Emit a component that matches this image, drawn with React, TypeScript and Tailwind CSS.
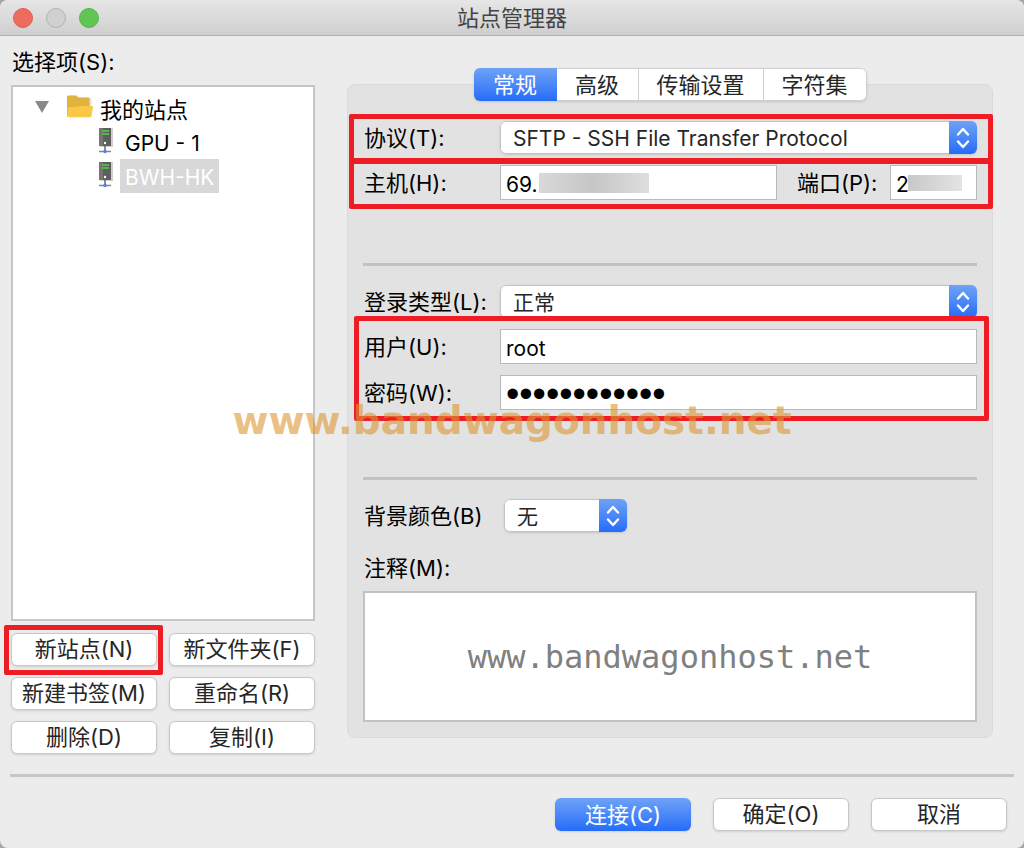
import { useState } from "react";
import type { ReactNode } from "react";

const tabs = [
  { label: "常规", width: "w-[83px]" },
  { label: "高级", width: "w-[82px]" },
  { label: "传输设置", width: "w-[125px]" },
  { label: "字符集", width: "w-[103px]" },
];

const siteButtons = ["新站点(N)", "新文件夹(F)", "新建书签(M)", "重命名(R)", "删除(D)", "复制(I)"];

const inputStyle = "h-[35px] min-w-0 border border-[#b9b9b9] bg-white pt-[3px] pl-[5px] text-[21px] outline-none";
const buttonStyle = "h-[33px] rounded-md border border-[#c8c8c8] bg-white pb-[2px] text-[#262626] shadow-sm";

function FolderIcon() {
  return (
    <svg width="28" height="34" viewBox="0 0 28 34" aria-hidden="true">
      <path d="M2 6q0-1.500 1.500-1.500h6.500l2 2h11q1.500 0 1.500 1.500v17q0 1.500-1.500 1.500h-19.500q-1.500 0-1.500-1.500z" fill="#d0d0d0" opacity=".6" />
      <path d="M0 6q0-1.500 1.500-1.500h7q1 0 1.500 1t1.500 1h9.500q1.500 0 1.500 1.500v9h-23z" fill="#e2b33c" />
      <path d="M0 15v9q0 2 2 2h3v-11z" fill="#e2b33c" />
      <path d="M3 16h7l3-1h12q1.200 0 1 1.200l-1.500 8.300q-.3 1.500-1.800 1.500h-21q-1.700 0-1.500-1.500l.7-7q.2-1.500 1.300-1.500z" fill="#f8c846" />
    </svg>
  );
}

function ServerIcon() {
  return (
    <svg width="16" height="34" viewBox="0 0 16 34" aria-hidden="true">
      <rect x="2" y="3" width="13" height="19" fill="#cfcfcf" />
      <rect x="1" y="3" width="12" height="18" fill="#5e5e5e" />
      <rect x="1" y="3" width="4" height="18" fill="#757575" />
      <rect x="4" y="5" width="7" height="2" fill="#55b649" />
      <rect x="4" y="8" width="7" height="2" fill="#55b649" />
      <circle cx="7" cy="18" r="1.200" fill="#fff" />
      <path d="M7 21v5" stroke="#666" strokeWidth="1.500" />
      <path d="M1 26.500h12" stroke="#888" strokeWidth="1.500" />
      <circle cx="7" cy="26.500" r="1.800" fill="#4a86e8" />
    </svg>
  );
}

function Select({ id, value, className }: { id: string; value: string; className: string }) {
  return (
    <div className={`relative flex h-[33px] overflow-hidden rounded-md shadow-sm ${className}`}>
      <select
        id={id}
        className="w-full appearance-none rounded-md border border-[#c4c4c4] bg-white pt-[2px] pr-8 pl-3 text-[21px] text-[#262626] outline-none"
      >
        <option>{value}</option>
      </select>
      <div className="pointer-events-none absolute inset-y-0 right-0 flex w-7 items-center justify-center bg-linear-to-b from-[#6fa2f6] to-[#246bf8]">
        <svg width="14" height="22" viewBox="0 0 14 22" fill="none" stroke="#fff" strokeWidth="2.400" strokeLinecap="round" strokeLinejoin="round" aria-hidden="true">
          <path d="M2 7.500l5-5.500 5 5.500M2 14.500l5 5.500 5-5.500" />
        </svg>
      </div>
    </div>
  );
}

function Row({ id, label, children }: { id: string; label: string; children: ReactNode }) {
  return (
    <div className="flex items-center">
      <label htmlFor={id} className="w-[137px] shrink-0 pl-px whitespace-nowrap">{label}</label>
      {children}
    </div>
  );
}

export default function App() {
  const [activeTab, setActiveTab] = useState("常规");

  return (
    <div className="min-h-screen bg-[#a8a8a8] font-['Inter','Noto_Sans_CJK_SC',sans-serif] text-[22px] leading-7 text-black">
      <div className="relative flex min-h-screen flex-col overflow-hidden rounded-lg bg-[#ececec]">
        {/* TITLE BAR */}
        <header className="relative flex h-9 items-center justify-center border-b border-[#b1b1b1] bg-linear-to-b from-[#e6e6e6] to-[#cfcfcf]">
          <div className="absolute left-[13px] flex gap-[13px]">
            <button aria-label="关闭" className="size-5 rounded-full border border-[#dc5f54] bg-[#ed6b5f]" />
            <button aria-label="最小化" className="size-5 rounded-full border border-[#b4b4b4] bg-[#d0d0d0]" />
            <button aria-label="缩放" className="size-5 rounded-full border border-[#56b44a] bg-[#61c554]" />
          </div>
          <h1 className="text-[#444444]">站点管理器</h1>
        </header>

        <main className="flex gap-8 pr-[31px] pl-[11px]">
          {/* SITE LIST */}
          <section className="flex w-[304px] shrink-0 flex-col pt-3">
            <h2 className="pl-px">选择项(S):</h2>
            <ul role="tree" className="mt-[9px] flex-1 border-2 border-[#c6c6c6] bg-white pt-1 text-[21px]">
              <li role="treeitem" aria-expanded="true" className="flex h-[34px] items-center pl-[21px]">
                <button aria-label="折叠" className="mr-[17px]">
                  <svg width="16" height="20" viewBox="0 0 16 20" aria-hidden="true">
                    <path d="M1 3h14l-7 12z" fill="#8a8a8a" />
                  </svg>
                </button>
                <FolderIcon />
                <span className="pt-1 pl-[5px] text-[22px]">我的站点</span>
              </li>
              <li role="treeitem" className="flex h-[34px] items-center pl-[85px]">
                <ServerIcon />
                <span className="ml-[6px] px-[5px] pt-1 leading-[30px]">GPU - 1</span>
              </li>
              <li role="treeitem" aria-selected="true" className="flex h-[34px] items-center pl-[85px]">
                <ServerIcon />
                <span className="ml-[6px] bg-[#d8d8d8] px-[5px] pt-1 leading-[30px] text-white">BWH-HK</span>
              </li>
            </ul>
            <div className="relative mt-3 grid grid-cols-2 gap-x-3 gap-y-[11px]">
              {siteButtons.map((name) => (
                <button key={name} className={buttonStyle}>
                  {name}
                </button>
              ))}
              <div className="pointer-events-none absolute -top-2 -left-[7px] h-[50px] w-[159px] rounded-xs border-5 border-[#ee1c24]" />
            </div>
          </section>

          {/* SETTINGS */}
          <section className="min-w-0 flex-1 pt-8 pb-4">
            <div role="tablist" className="relative z-10 mx-auto flex h-[33px] w-fit overflow-hidden rounded-md shadow-sm">
              {tabs.map((tab) => (
                <button
                  key={tab.label}
                  role="tab"
                  aria-selected={activeTab === tab.label}
                  onClick={() => setActiveTab(tab.label)}
                  className={`${tab.width} ${
                    activeTab === tab.label
                      ? "bg-linear-to-b from-[#6fa2f6] to-[#246bf8] text-white"
                      : "border-y border-r border-[#cfcfcf] bg-white text-[#262626] last:rounded-r-md"
                  }`}
                >
                  {tab.label}
                </button>
              ))}
            </div>

            <form className="-mt-[17px] rounded-lg border border-[#dadada] bg-[#e2e2e2] px-[15px] pt-9 pb-[15px]">
              <div className="relative flex flex-col gap-[11px]">
                <Row id="protocol" label="协议(T):">
                  <Select id="protocol" value="SFTP - SSH File Transfer Protocol" className="flex-1" />
                </Row>
                <Row id="host" label="主机(H):">
                  <div className="relative min-w-0 flex-1">
                    <input id="host" defaultValue="69." className={`${inputStyle} block w-full`} />
                    <div className="absolute top-2 left-[39px] h-5 w-[110px] bg-linear-to-r from-[#d9d9d9] via-[#c6c6c6] to-[#dedede]" />
                  </div>
                  <label htmlFor="port" className="w-[113px] shrink-0 pl-5 whitespace-nowrap">端口(P):</label>
                  <div className="relative w-[87px] shrink-0">
                    <input id="port" defaultValue="2" className={`${inputStyle} block w-full`} />
                    <div className="absolute top-[10px] left-[18px] h-4 w-[54px] bg-linear-to-r from-[#c8c8c8] to-[#e4e4e4]" />
                  </div>
                </Row>
                <div className="pointer-events-none absolute -top-[7px] -right-4 -left-[14px] h-[50px] rounded-xs border-5 border-[#ee1c24]" />
                <div className="pointer-events-none absolute -right-4 -bottom-[9px] -left-[14px] h-[51px] rounded-xs border-5 border-[#ee1c24]" />
              </div>

              <hr className="mt-[63px] h-[3px] border-0 bg-[#c2c2c2]" />

              <div className="mt-[19px]">
                <Row id="logon" label="登录类型(L):">
                  <Select id="logon" value="正常" className="flex-1" />
                </Row>
              </div>
              <div className="relative mt-[11px] flex flex-col gap-[11px]">
                <Row id="user" label="用户(U):">
                  <input id="user" defaultValue="root" className={`${inputStyle} flex-1`} />
                </Row>
                <Row id="password" label="密码(W):">
                  <input
                    id="password"
                    type="password"
                    defaultValue="abcdefghijkl"
                    className="h-[35px] min-w-0 flex-1 border border-[#b9b9b9] bg-white pt-1 pl-[5px] font-['Liberation_Sans',sans-serif] text-[38px] outline-none"
                  />
                </Row>
                <div className="pointer-events-none absolute -top-[13px] -right-3 -bottom-[11px] -left-[9px] rounded-xs border-5 border-[#ee1c24]" />
              </div>

              <hr className="mt-[67px] h-[3px] border-0 bg-[#c2c2c2]" />

              <div className="mt-[19px]">
                <Row id="color" label="背景颜色(B)">
                  <Select id="color" value="无" className="ml-1 w-[123px]" />
                </Row>
              </div>
              <label htmlFor="notes" className="mt-[22px] block pl-px">注释(M):</label>
              <textarea
                id="notes"
                defaultValue="www.bandwagonhost.net"
                className="mt-[9px] block h-[131px] w-full resize-none border-2 border-[#c2c2c2] bg-white pt-11 text-center font-['DejaVu_Sans_Mono',monospace] text-[32px] leading-10 text-[#808080] outline-none"
              />
            </form>
          </section>
        </main>

        <hr className="mx-[10px] mt-5 h-[3px] border-0 bg-[#c6c6c6]" />

        {/* FOOTER */}
        <footer className="flex justify-end gap-[22px] pt-[21px] pr-[17px] pb-[17px]">
          <button className="h-[33px] w-[136px] rounded-md bg-linear-to-b from-[#6fa2f6] to-[#246bf8] text-white shadow-sm">连接(C)</button>
          <button className={`${buttonStyle} w-[136px]`}>确定(O)</button>
          <button className={`${buttonStyle} w-[136px]`}>取消</button>
        </footer>

        {/* WATERMARK */}
        <div className="pointer-events-none absolute inset-x-0 top-[397px] z-20 text-center font-['DejaVu_Sans',sans-serif] text-[39px] leading-[48px] font-bold text-[#dc9632]/60">
          www.bandwagonhost.net
        </div>
      </div>
    </div>
  );
}
